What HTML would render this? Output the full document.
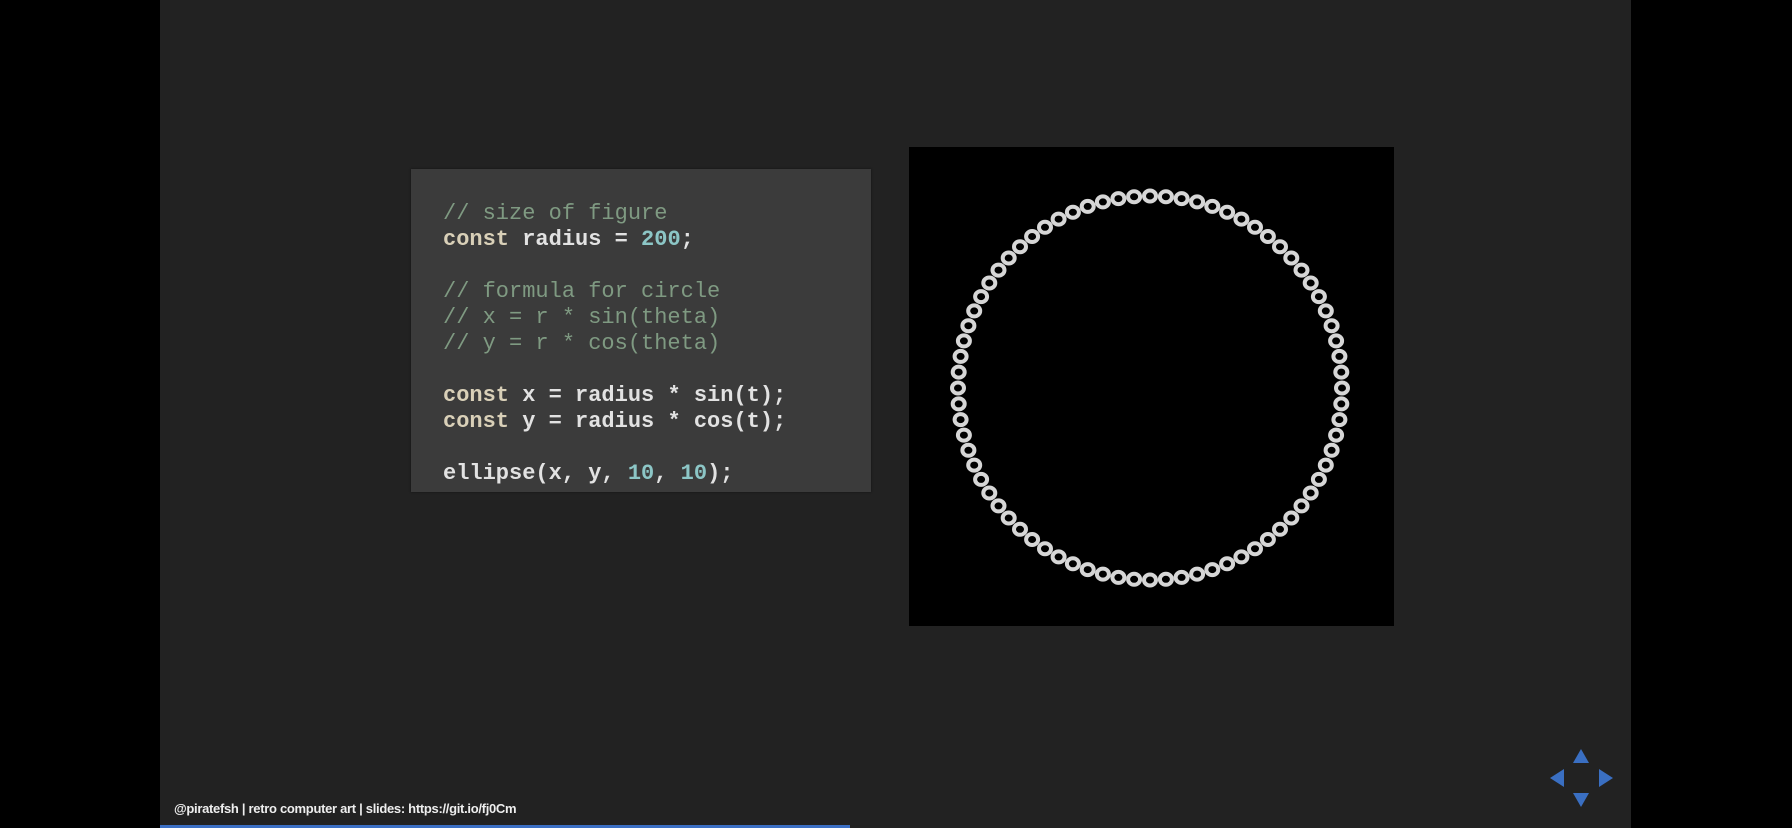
<!DOCTYPE html>
<html><head><style>
html,body{margin:0;padding:0;background:#000;width:1792px;height:828px;overflow:hidden}
#slide{position:absolute;left:160px;top:0;width:1471px;height:828px;background:#222}
#code{position:absolute;left:411px;top:169px;width:460px;height:323px;background:#3b3b3b;box-shadow:0 0 2px #111}
pre{margin:0;position:absolute;left:32px;top:32px;font-family:"Liberation Mono",monospace;font-size:22px;line-height:26px;color:#e2e2e2;font-weight:bold}
.c{color:#7f9a82;font-weight:normal}.k{color:#d9d0b8}.n{color:#8cc6c6}
#img{position:absolute;left:909px;top:147px;width:485px;height:479px;background:#000}
#foot{position:absolute;left:174px;top:801px;font-family:"Liberation Sans",sans-serif;font-size:13px;color:#eee;font-weight:bold;letter-spacing:-0.3px}
#bar{position:absolute;left:160px;top:825px;width:690px;height:3px;background:#3b6fc4}
</style></head><body>
<div id="slide"></div>
<div id="code"><pre><span class="c">// size of figure</span>
<span class="k">const</span> radius = <span class="n">200</span>;

<span class="c">// formula for circle</span>
<span class="c">// x = r * sin(theta)</span>
<span class="c">// y = r * cos(theta)</span>

<span class="k">const</span> x = radius * sin(t);
<span class="k">const</span> y = radius * cos(t);

ellipse(x, y, <span class="n">10</span>, <span class="n">10</span>);</pre></div>
<div id="img"></div>
<svg style="position:absolute;left:0;top:0" width="1792" height="828" id="dots"></svg>
<div id="foot">@piratefsh | retro computer art | slides: https://git.io/fj0Cm</div>
<div id="bar"></div>
<svg style="position:absolute;left:1545px;top:745px" width="74" height="66">
<g fill="#3a6fc2">
<polygon points="36,4 44,18 28,18"/>
<polygon points="36,62 44,48 28,48"/>
<polygon points="5,33 19,24 19,42"/>
<polygon points="68,33 54,24 54,42"/>
</g></svg>
<script>
var s=document.getElementById('dots'),h='';
var cx=1150,cy=388,r=192,N=76;
for(var i=0;i<N;i++){var t=i/N*2*Math.PI;var x=cx+r*Math.sin(t),y=cy+r*Math.cos(t);
h+='<ellipse cx="'+x.toFixed(1)+'" cy="'+y.toFixed(1)+'" rx="6" ry="5.5" fill="none" stroke="#d6d6d6" stroke-width="4"/>';}
s.innerHTML=h;
</script>
</body></html>
